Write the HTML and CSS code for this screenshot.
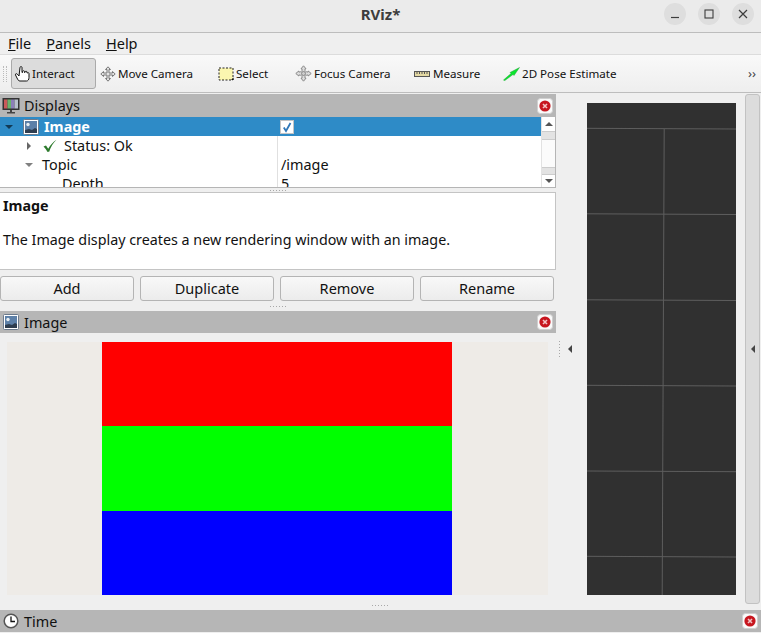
FILE: index.html
```html
<!DOCTYPE html>
<html lang="en">
<head>
    <meta charset="UTF-8">
    <title>RViz*</title>
    <link rel="stylesheet" href="styles.css">
</head>
<body>
    <svg class="defs" width="0" height="0">
        <symbol id="close" viewBox="0 0 16 16">
            <rect x="0.5" y="0.5" width="15" height="15" rx="3" fill="#fafafa" stroke="#cfcfcf"/>
            <circle cx="8" cy="8" r="5.600" fill="#c7161f"/>
            <path d="M6 6l4 4M10 6l-4 4" stroke="#f3c4c6" stroke-width="1.600"/>
        </symbol>
        <symbol id="picture" viewBox="0 0 16 16">
            <rect x="0.5" y="0.5" width="15" height="15" rx="1" fill="#fff" stroke="#6d7b8d"/>
            <rect x="2" y="2" width="12" height="12" fill="#5d80a8"/>
            <circle cx="5" cy="5.500" r="1.700" fill="#e8eef2"/>
            <path d="M2 14v-3l4-1 3 1 3-2 2 1v4z" fill="#2e3d4f"/>
        </symbol>
    </svg>

    <header class="titlebar">
        <span class="title">RViz*</span>
        <div class="win-btns">
            <span class="win-btn"><svg width="10" height="10" viewBox="0 0 10 10"><path d="M1 8.500h8" stroke="#3d3d3d" stroke-width="1.200"/></svg></span>
            <span class="win-btn"><svg width="10" height="10" viewBox="0 0 10 10"><rect x="1" y="1" width="8" height="8" fill="none" stroke="#3d3d3d" stroke-width="1.100"/></svg></span>
            <span class="win-btn"><svg width="10" height="10" viewBox="0 0 10 10"><path d="M1 1l8 8M9 1l-8 8" stroke="#3d3d3d" stroke-width="1.200"/></svg></span>
        </div>
    </header>

    <nav class="menubar">
        <span><u>F</u>ile</span>
        <span><u>P</u>anels</span>
        <span><u>H</u>elp</span>
    </nav>

    <div class="toolbar">
        <span class="grip"></span>
        <div class="tool tool-active tool-interact">
            <svg width="18" height="18" viewBox="0 0 18 18"><path d="M6 2.500c0-1.200 2-1.200 2 0v5h.5V6.500c0-1 2-1 2 0v1h.5v-.5c0-1 2-1 2 0v1h.3c.7-.8 1.700-.3 1.700.5v4c0 2-1 3.500-2.500 3.500H6c-1.500 0-2-1-3-3l-1.500-3c-.5-1.300 1-1.800 1.800-.8L5 11z" fill="#fff" stroke="#111" stroke-width="1"/></svg>
            <span>Interact</span>
        </div>
        <div class="tool tool-move">
            <svg width="16" height="16" viewBox="0 0 16 16"><path d="M8 .8l2.500 2.700H9v3.500h3.500V5.500L15.200 8l-2.700 2.500V9H9v3.500h1.500L8 15.200 5.500 12.500H7V9H3.500v1.500L.8 8l2.700-2.500V7H7V3.500H5.500z" fill="#e4e4e4" stroke="#777" stroke-width="1"/></svg>
            <span>Move Camera</span>
        </div>
        <div class="tool tool-select">
            <svg width="16" height="14" viewBox="0 0 16 14"><rect x="1" y="1" width="14" height="12" fill="#fbf6b0" stroke="#222" stroke-dasharray="2 1.500"/><path d="M13 13h2.500v-2.500z" fill="#111"/></svg>
            <span>Select</span>
        </div>
        <div class="tool tool-focus">
            <svg width="17" height="17" viewBox="0 0 17 17"><path d="M8.500 .8l2.500 3h-1v1.700l1.500 1.500h1.700v-1l3 2.500-3 2.500v-1h-1.700L10 11.500v1.700h1l-2.500 3-2.500-3h1v-1.700L5.500 10H3.800v1l-3-2.500 3-2.500v1h1.700L7 5.500V3.800H6z" fill="#ddd" stroke="#888"/><circle cx="8.500" cy="8.500" r="2" fill="#ccc" stroke="#888"/></svg>
            <span>Focus Camera</span>
        </div>
        <div class="tool tool-measure">
            <svg width="16" height="8" viewBox="0 0 16 8"><rect x=".5" y="1.500" width="15" height="5" fill="#e4d9a4" stroke="#555"/><path d="M3 2v2M5.500 2v2M8 2v2M10.500 2v2M13 2v2" stroke="#555"/></svg>
            <span>Measure</span>
        </div>
        <div class="tool tool-pose">
            <svg width="17" height="14" viewBox="0 0 17 14"><path d="M.5 13L8 6.500 7 5.500 16.500 .5 11 8.500 10 7.500 1.500 13.800z" fill="#0ce62e" stroke="#1a8f2f" stroke-width=".4"/></svg>
            <span>2D Pose Estimate</span>
        </div>
        <span class="more">››</span>
    </div>

    <div class="workspace">
        <div class="left-col">
            <div class="dock-head dock-head-top">
                <svg class="head-icon" width="18" height="16" viewBox="0 0 18 16"><rect x="1" y=".5" width="16" height="11" fill="#333" stroke="#333"/><rect x="2" y="1.500" width="3.500" height="9" fill="#c95a5a"/><rect x="5.500" y="1.500" width="3.500" height="9" fill="#69b36b"/><rect x="9" y="1.500" width="3.500" height="9" fill="#8c7fb8"/><rect x="12.500" y="1.500" width="3.500" height="9" fill="#b7c0cc"/><path d="M8 12h2v2h3v1.500H5V14h3z" fill="#444"/></svg>
                <span>Displays</span>
                <svg class="close-btn" width="16" height="16"><use href="#close"/></svg>
            </div>

            <div class="tree">
                <div class="tree-rows">
                    <div class="row row-selected">
                        <div class="name name-top">
                            <span class="caret caret-down caret-dark"></span>
                            <svg class="row-icon" width="16" height="16"><use href="#picture"/></svg>
                            <b>Image</b>
                        </div>
                        <div class="value"><span class="checkbox"><svg width="12" height="12" viewBox="0 0 12 12"><path d="M2.800 6.500l2.200 3.500L9.500 2" fill="none" stroke="#2f77b8" stroke-width="1.800"/></svg></span></div>
                    </div>
                    <div class="row">
                        <div class="name name-status">
                            <span class="caret caret-right"></span>
                            <svg class="status-check" width="14" height="14" viewBox="0 0 14 14"><path d="M.5 7.500l2.500-1 2.200 3.200C7.500 6 10 3 13.500 .8c-3.200 3.200-5.800 7-7.300 12H4.200C3.500 10.800 2 9 .5 7.500z" fill="#2c7a2c"/></svg>
                            <span>Status: Ok</span>
                        </div>
                        <div class="value"></div>
                    </div>
                    <div class="row">
                        <div class="name name-topic">
                            <span class="caret caret-down"></span>
                            <span>Topic</span>
                        </div>
                        <div class="value">/image</div>
                    </div>
                    <div class="row">
                        <div class="name name-depth">Depth</div>
                        <div class="value">5</div>
                    </div>
                </div>
                <div class="scrollbar">
                    <span class="sb-btn"><span class="sb-up"></span></span>
                    <span class="sb-handle"></span>
                    <span class="sb-track"></span>
                    <span class="sb-handle sb-handle-low"></span>
                    <span class="sb-btn sb-btn-low"><span class="sb-down"></span></span>
                </div>
            </div>

            <div class="h-dots h-dots-tree"></div>

            <div class="description">
                <h4>Image</h4>
                <p>The Image display creates a new rendering window with an image.</p>
            </div>

            <div class="buttons">
                <button type="button">Add</button>
                <button type="button">Duplicate</button>
                <button type="button">Remove</button>
                <button type="button">Rename</button>
            </div>

            <div class="h-dots h-dots-btns"></div>

            <div class="dock-head">
                <svg class="head-icon head-icon-image" width="16" height="16"><use href="#picture"/></svg>
                <span>Image</span>
                <svg class="close-btn" width="16" height="16"><use href="#close"/></svg>
            </div>

            <div class="image-view">
                <div class="stripes">
                    <div class="stripe-red"></div>
                    <div class="stripe-green"></div>
                    <div class="stripe-blue"></div>
                </div>
            </div>
        </div>

        <div class="splitter">
            <span class="v-dots"></span>
            <span class="arrow-left"></span>
        </div>

        <svg class="canvas" width="149" height="492" viewBox="0 0 149 492">
            <rect width="149" height="492" fill="#303030"/>
            <g stroke="#5e5e5e" fill="none">
                <path d="M0 25.300L149 26M0 110.800L149 111.500M0 196.800L149 197.500M0 282.300L149 283M0 368L149 368.700M0 453.300L149 454"/>
                <path d="M77.200 26L75.200 492"/>
            </g>
        </svg>

        <div class="side-handle"><span class="arrow-left"></span></div>
    </div>

    <div class="h-dots h-dots-time"></div>

    <div class="dock-head time-head">
        <svg class="head-icon head-icon-image" width="16" height="16" viewBox="0 0 16 16"><circle cx="8" cy="8" r="6.800" fill="#fff" stroke="#555" stroke-width="1.500"/><path d="M8 3.500V8.500H12" fill="none" stroke="#111" stroke-width="1.300"/></svg>
        <span>Time</span>
        <svg class="close-btn" width="16" height="16"><use href="#close"/></svg>
    </div>
</body>
</html>
```

FILE: styles.css
```css
* {
    box-sizing: border-box;
}

html, body {
    height: 100%;
}

body {
    margin: 0;
    overflow: hidden;
    background-color: #efefef;
    color: #111;
    font-family: "Noto Sans", Arial, sans-serif;
    font-size: 14.4px;
    display: flex;
    flex-direction: column;
}

.defs {
    display: block;
    height: 0;
}

/* window title */
.titlebar {
    height: 33px;
    padding-bottom: 4px;
    background-color: #ebebeb;
    border-bottom: 1px solid #bdbdbd;
    display: flex;
    align-items: center;
    justify-content: center;
    position: relative;
}

.title {
    font-weight: bold;
    font-size: 15px;
    color: #3d3d3d;
}

.win-btns {
    position: absolute;
    right: 7px;
    top: 3px;
    display: flex;
    gap: 12px;
}

.win-btn {
    width: 22px;
    height: 22px;
    border-radius: 50%;
    background-color: #dedede;
    display: flex;
    align-items: center;
    justify-content: center;
}

/* menu */
.menubar {
    height: 22px;
    padding-left: 8px;
    padding-bottom: 2px;
    background-color: #efefef;
    border-bottom: 1px solid #dcdcdc;
    display: flex;
    align-items: center;
    gap: 15px;
    font-size: 14.5px;
}

/* toolbar */
.toolbar {
    height: 38px;
    background: linear-gradient(#f9f9f9, #eeeeee);
    border-bottom: 1px solid #bdbdbd;
    display: flex;
    align-items: center;
    font-size: 11.6px;
}

.grip {
    width: 4px;
    height: 16px;
    margin-left: 3px;
    margin-right: 4px;
    border-left: 1px dotted #bbb;
    border-right: 1px dotted #bbb;
}

.tool {
    display: flex;
    align-items: center;
    gap: 2px;
    flex: none;
}

.tool-active {
    width: 85px;
    height: 31px;
    padding-left: 2px;
    background-color: #dcdcdc;
    border: 1px solid #aaa;
    border-radius: 3px;
}

.tool-interact span {
    margin-left: -2px;
}

.tool-move {
    width: 118px;
    margin-left: 4px;
}

.tool-select {
    width: 77px;
}

.tool-focus {
    width: 119px;
}

.tool-measure {
    width: 89px;
}

.tool-measure svg {
    margin-right: 1px;
}

.more {
    margin-left: auto;
    margin-right: 5px;
    margin-bottom: 2px;
    font-size: 13px;
    color: #444;
}

/* panels */
.workspace {
    flex: 1;
    display: flex;
    min-height: 0;
}

.left-col {
    width: 556px;
    flex: none;
    display: flex;
    flex-direction: column;
    padding-top: 1px;
}

.dock-head {
    height: 22px;
    flex: none;
    background-color: #b6b6b6;
    display: flex;
    align-items: center;
    padding-right: 3px;
}

.dock-head-top {
    height: 23px;
}

.head-icon {
    margin-left: 2px;
    margin-right: 4px;
}

.head-icon-image {
    margin-left: 3px;
    margin-right: 5px;
}

.close-btn {
    margin-left: auto;
}

.tree {
    height: 71px;
    flex: none;
    display: flex;
    background-color: #fff;
    border-bottom: 1px solid #b5b5b5;
    overflow: hidden;
}

.tree-rows {
    width: 541px;
    overflow: hidden;
}

.row {
    height: 19px;
    display: flex;
    line-height: 19px;
}

.row-selected {
    background-color: #2e8bc7;
    color: #fff;
}

.name {
    width: 277px;
    display: flex;
    align-items: center;
    flex: none;
}

.value {
    flex: 1;
    padding-left: 3px;
    border-left: 1px solid #e0e0e0;
}

.row-selected .value {
    border-left: none;
    padding-left: 3px;
    display: flex;
    align-items: center;
}

.name-top {
    padding-left: 5px;
}

.row-icon {
    margin-left: 10px;
    margin-right: 5px;
}

.name-status {
    padding-left: 27px;
}

.status-check {
    margin-left: 12px;
    margin-right: 7px;
}

.name-topic {
    padding-left: 25px;
}

.name-topic .caret {
    margin-right: 9px;
}

.name-depth {
    padding-left: 62px;
}

.caret {
    width: 0;
    height: 0;
    flex: none;
}

.caret-down {
    border-left: 4px solid transparent;
    border-right: 4px solid transparent;
    border-top: 4px solid #808080;
}

.caret-dark {
    border-top-color: #123a55;
}

.caret-right {
    border-top: 4px solid transparent;
    border-bottom: 4px solid transparent;
    border-left: 4px solid #666;
}

.checkbox {
    width: 14px;
    height: 14px;
    background-color: #fff;
    border: 1px solid #c4c4c4;
    display: flex;
    align-items: center;
    justify-content: center;
}

.scrollbar {
    width: 15px;
    border-left: 1px solid #e2e2e2;
    border-right: 1px solid #b5b5b5;
    display: flex;
    flex-direction: column;
    flex: none;
}

.sb-btn {
    height: 14px;
    display: flex;
    align-items: center;
    justify-content: center;
    flex: none;
}

.sb-btn-low {
    height: 13px;
    border-top: 1px solid #ccc;
}

.sb-up {
    border-left: 4px solid transparent;
    border-right: 4px solid transparent;
    border-bottom: 4px solid #555;
}

.sb-down {
    border-left: 4px solid transparent;
    border-right: 4px solid transparent;
    border-top: 4px solid #555;
}

.sb-handle {
    height: 9px;
    flex: none;
    background-color: #e3e3e3;
    border-top: 1px solid #ccc;
    border-bottom: 1px solid #ccc;
}

.sb-handle-low {
    height: 7px;
    border-bottom: none;
}

.sb-track {
    flex: 1;
    background-color: #fbfbfb;
}

.h-dots {
    height: 4px;
    flex: none;
    display: flex;
    justify-content: center;
    align-items: center;
}

.h-dots::after {
    content: "";
    width: 17px;
    height: 1px;
    background: repeating-linear-gradient(90deg, #a8a8a8 0 1px, transparent 1px 3px);
}

.h-dots-btns {
    height: 10px;
}

.h-dots-time {
    height: 10px;
}

.description {
    height: 78px;
    flex: none;
    background-color: #fff;
    border: 1px solid #c4c4c4;
    border-left: none;
    padding: 3px;
    margin-bottom: 6px;
    font-size: 14.3px;
}

.description h4 {
    margin: 0 0 15px;
    font-size: 14.3px;
    line-height: 19px;
}

.description p {
    margin: 0;
    line-height: 19px;
}

.buttons {
    height: 25px;
    flex: none;
    display: flex;
    gap: 6px;
}

.buttons button {
    width: 134px;
    height: 25px;
    padding: 0 0 2px;
    background: linear-gradient(#f8f8f8, #ececec);
    border: 1px solid #b4b4b4;
    border-radius: 3px;
    color: #111;
    font-family: inherit;
    font-size: 14.5px;
}

.image-view {
    flex: none;
    height: 253px;
    margin: 9px 8px 0 7px;
    background-color: #eeebe7;
    display: flex;
}

.stripes {
    width: 350px;
    margin-left: 95px;
    display: flex;
    flex-direction: column;
}

.stripe-red {
    height: 84px;
    background-color: #f00;
}

.stripe-green {
    height: 85px;
    background-color: #0f0;
}

.stripe-blue {
    height: 84px;
    background-color: #00f;
}

.splitter {
    width: 31px;
    height: 16px;
    flex: none;
    margin-top: 248px;
    display: flex;
    align-items: center;
    padding-left: 3px;
    gap: 8px;
}

.v-dots {
    width: 1px;
    height: 16px;
    background: repeating-linear-gradient(#a8a8a8 0 1px, transparent 1px 3px);
}

.arrow-left {
    width: 0;
    height: 0;
    border-top: 4px solid transparent;
    border-bottom: 4px solid transparent;
    border-right: 4px solid #444;
}

.canvas {
    flex: none;
    margin-top: 10px;
}

.side-handle {
    width: 15px;
    height: 510px;
    flex: none;
    margin-top: 1px;
    margin-left: 9px;
    background-color: #dcdcdc;
    border: 1px solid #c2c2c2;
    border-radius: 3px;
    display: flex;
    align-items: center;
    justify-content: center;
}

.time-head {
    margin-bottom: 1px;
}
```
